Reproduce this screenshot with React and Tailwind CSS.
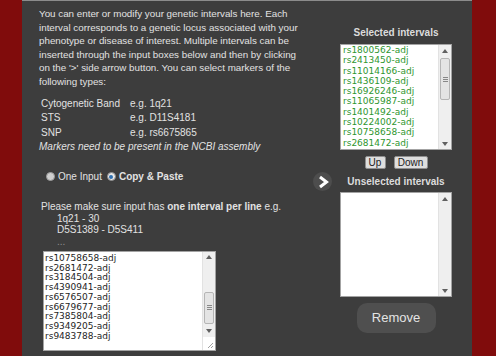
const SELECTED = [
  "rs1800562-adj", "rs2413450-adj", "rs11014166-adj", "rs1436109-adj", "rs16926246-adj",
  "rs11065987-adj", "rs1401492-adj", "rs10224002-adj", "rs10758658-adj", "rs2681472-adj",
];

const PASTED = [
  "rs10758658-adj", "rs2681472-adj", "rs3184504-adj", "rs4390941-adj", "rs6576507-adj",
  "rs6679677-adj", "rs7385804-adj", "rs9349205-adj", "rs9483788-adj",
];

const MARKERS = [
  ["Cytogenetic Band", "e.g. 1q21"],
  ["STS", "e.g. D11S4181"],
  ["SNP", "e.g. rs6675865"],
];

const INTRO = [
  "You can enter or modify your genetic intervals here. Each",
  "interval corresponds to a genetic locus associated with your",
  "phenotype or disease of interest. Multiple intervals can be",
  "inserted through the input boxes below and then by clicking",
  "on the '>' side arrow button. You can select markers of the",
  "following types:",
];

function Tri({ down }) {
  return (
    <svg width="6" height="4" viewBox="0 0 6 4" className="shrink-0">
      <path d={down ? "M0 0h6L3 4z" : "M0 4h6L3 0z"} fill="#606060" />
    </svg>
  );
}

// fake native scrollbar: arrow, optional thumb, arrow, optional resize grip
function Scrollbar({ thumbTop, thumbH, grip }) {
  return (
    <div className="w-[13px] h-full bg-[#efefef] border-l border-[#e2e2e2] flex flex-col items-center">
      <div className="h-[11px] flex items-center justify-center"><Tri /></div>
      <div className="flex-1 w-full relative">
        {thumbH && (
          <div
            className="absolute left-[1px] right-[1px] rounded-[2px] border border-[#b5b5b5] bg-[#e4e4e4] flex flex-col items-center justify-center gap-[1px]"
            style={{ top: thumbTop, height: thumbH }}
          >
            <div className="w-[5px] h-px bg-[#888]" />
            <div className="w-[5px] h-px bg-[#888]" />
            <div className="w-[5px] h-px bg-[#888]" />
          </div>
        )}
      </div>
      <div className="h-[11px] flex items-center justify-center"><Tri down /></div>
      {grip && (
        <div className="h-[13px] w-full bg-white flex items-end justify-end p-[1px]">
          <svg width="8" height="8" viewBox="0 0 8 8">
            <path d="M7 2L2 7M7 5L5 7" stroke="#a0a0a0" strokeWidth="1" />
          </svg>
        </div>
      )}
    </div>
  );
}

function Radio({ checked }) {
  return checked ? (
    <span className="w-[9px] h-[9px] rounded-full border border-[#8a8a8a] bg-[#e6e6e6] flex items-center justify-center">
      <span className="w-[4px] h-[4px] rounded-full bg-[#2f6fb0]" />
    </span>
  ) : (
    <span className="w-[9px] h-[9px] rounded-full border border-[#9a9a9a] bg-[#cfcfcf]" />
  );
}

export default function App() {
  return (
    <div
      className="w-[496px] h-[356px] flex bg-[#800c0c] overflow-hidden text-[#e2e2e2]"
      style={{ fontFamily: "'Liberation Sans', Arial, sans-serif" }}
    >
      <div className="w-[22px] shrink-0" />

      <div className="w-[450px] shrink-0 bg-[#3d3d3d] border-t border-[#8c8c8c] flex">
        {/* ── LEFT: explanation + paste box ── */}
        <div className="w-[291px] shrink-0 pl-[17px] pt-[6px] flex flex-col items-start">
          <p className="w-[272px] text-[9.8px] leading-[13.6px] whitespace-nowrap">
            {INTRO.map((line) => <span key={line} className="block">{line}</span>)}
          </p>

          <div className="mt-[8px] pl-[2px] grid grid-cols-[89px_auto] text-[10px] leading-[14.6px]">
            {MARKERS.map(([type, eg]) => (
              <div key={type} className="contents">
                <span>{type}</span>
                <span>{eg}</span>
              </div>
            ))}
          </div>
          <p className="text-[10px] leading-[14.6px] italic">Markers need to be present in the NCBI assembly</p>

          <div className="mt-[15px] pl-[7px] h-[14px] flex items-center text-[10px]">
            <Radio />
            <span className="ml-[3px]">One Input</span>
            <span className="ml-[5px]"><Radio checked /></span>
            <span className="ml-[3px] font-bold">Copy &amp; Paste</span>
          </div>

          <div className="mt-[17px] pl-[2px] text-[10px] leading-[11.7px]">
            <p>
              Please make sure input has <b>one interval per line</b> e.g.
            </p>
            <div className="pl-[16px]">
              <p>1q21 - 30</p>
              <p>D5S1389 - D5S411</p>
              <p className="text-[#8e8e8e]">...</p>
            </div>
          </div>

          <div className="mt-[3px] ml-[4px] w-[173px] h-[100px] bg-white border border-[#a3a3a3] flex">
            <div
              className="flex-1 pl-[1px] pt-[2px] leading-[9.75px] text-[#1e1e1e] overflow-hidden"
              style={{ fontFamily: "'DejaVu Sans', Tahoma, sans-serif", fontSize: "9px" }}
            >
              {PASTED.map((s) => <div key={s}>{s}</div>)}
            </div>
            <Scrollbar thumbTop={29} thumbH={32} grip />
          </div>
        </div>

        {/* ── RIGHT: selected / unselected lists ── */}
        <div className="w-[139px] shrink-0 pt-[26px] flex flex-col">
          <div className="ml-[27px] w-[112px] flex flex-col items-center">
            <h3 className="text-[10px] leading-[12px] font-bold text-[#dcdcdc]">Selected intervals</h3>
            <div className="mt-[5px] w-[112px] h-[106px] bg-white border border-[#a3a3a3] flex">
              <div
                className="flex-1 pl-[2px] text-[#2f962f] leading-[10.3px] overflow-hidden"
                style={{ fontFamily: "'DejaVu Sans', Tahoma, sans-serif", fontSize: "9px" }}
              >
                {SELECTED.map((s) => <div key={s}>{s}</div>)}
              </div>
              <Scrollbar thumbTop={2} thumbH={42} />
            </div>
            <div className="mt-[6px] flex gap-[8px] text-[10px] text-[#222]">
              <button className="w-[21px] h-[13px] leading-[11px] rounded-[2px] border border-[#8f8f8f] bg-[#dedede]">Up</button>
              <button className="w-[34px] h-[13px] leading-[11px] rounded-[2px] border border-[#8f8f8f] bg-[#dedede]">Down</button>
            </div>
          </div>

          <div className="mt-[3px] flex items-center">
            <button className="w-[19px] h-[19px] rounded-full bg-[#4d4d4d] flex items-center justify-center">
              <svg width="12" height="14" viewBox="0 0 12 14">
                <path d="M3 2L9.5 7L3 12" fill="none" stroke="#fff" strokeWidth="3" strokeLinejoin="miter" />
              </svg>
            </button>
            <h3 className="ml-[8px] w-[112px] text-center text-[10px] leading-[12px] font-bold text-[#dcdcdc]">
              Unselected intervals
            </h3>
          </div>

          <div className="mt-[1px] ml-[27px] w-[112px] h-[105px] bg-white border border-[#a3a3a3] flex">
            <div className="flex-1" />
            <Scrollbar />
          </div>

          <div className="mt-[6px] ml-[27px] w-[112px] flex justify-center">
            <button className="w-[79px] h-[30px] rounded-[10px] bg-[#4f4f4f] text-[13px] text-[#e4e4e4]">Remove</button>
          </div>
        </div>
      </div>

      <div className="flex-1" />
    </div>
  );
}
